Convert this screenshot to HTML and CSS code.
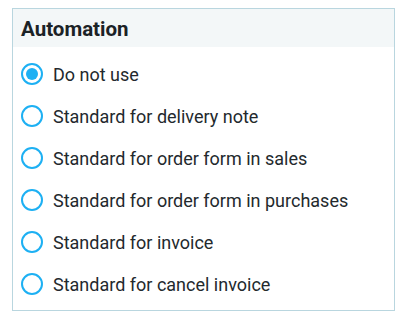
FILE: index.html
```html
<!DOCTYPE html>
<html>
<head>
  <meta charset="UTF-8">
  <title>Automation</title>
  <link rel="stylesheet" href="styles.css">
</head>
<body>
  <div class="panel">
    <div class="panel-head">Automation</div>
    <div class="panel-body">
      <label class="opt"><input type="radio" name="auto" checked><span class="dot"></span>Do not use</label>
      <label class="opt"><input type="radio" name="auto"><span class="dot"></span>Standard for delivery note</label>
      <label class="opt"><input type="radio" name="auto"><span class="dot"></span>Standard for order form in sales</label>
      <label class="opt"><input type="radio" name="auto"><span class="dot"></span>Standard for order form in purchases</label>
      <label class="opt"><input type="radio" name="auto"><span class="dot"></span>Standard for invoice</label>
      <label class="opt"><input type="radio" name="auto"><span class="dot"></span>Standard for cancel invoice</label>
    </div>
  </div>
</body>
</html>
```

FILE: styles.css
```css
body { margin: 0; font-family: Roboto, "Liberation Sans", sans-serif; background: #fff; color: #23292d; }
.panel { margin: 8px 0 0 12px; width: 381px; border: 1px solid #b9d6df; }
.panel-head { background: #f3f7f8; height: 38px; box-sizing: border-box; padding: 2px 0 0 8px; display: flex; align-items: center; font-size: 20.5px; font-weight: bold; color: #1b2226; }
.panel-body { padding: 6px 0 5px 8px; }
.opt { display: flex; align-items: center; height: 42px; font-size: 18px; cursor: pointer; }
.opt input { display: none; }
.dot { width: 18px; height: 18px; border: 2px solid #1db0f3; border-radius: 50%; margin-right: 10px; display: flex; align-items: center; justify-content: center; }
.opt input:checked + .dot::after { content: ""; width: 12px; height: 12px; border-radius: 50%; background: #1db0f3; }
```
